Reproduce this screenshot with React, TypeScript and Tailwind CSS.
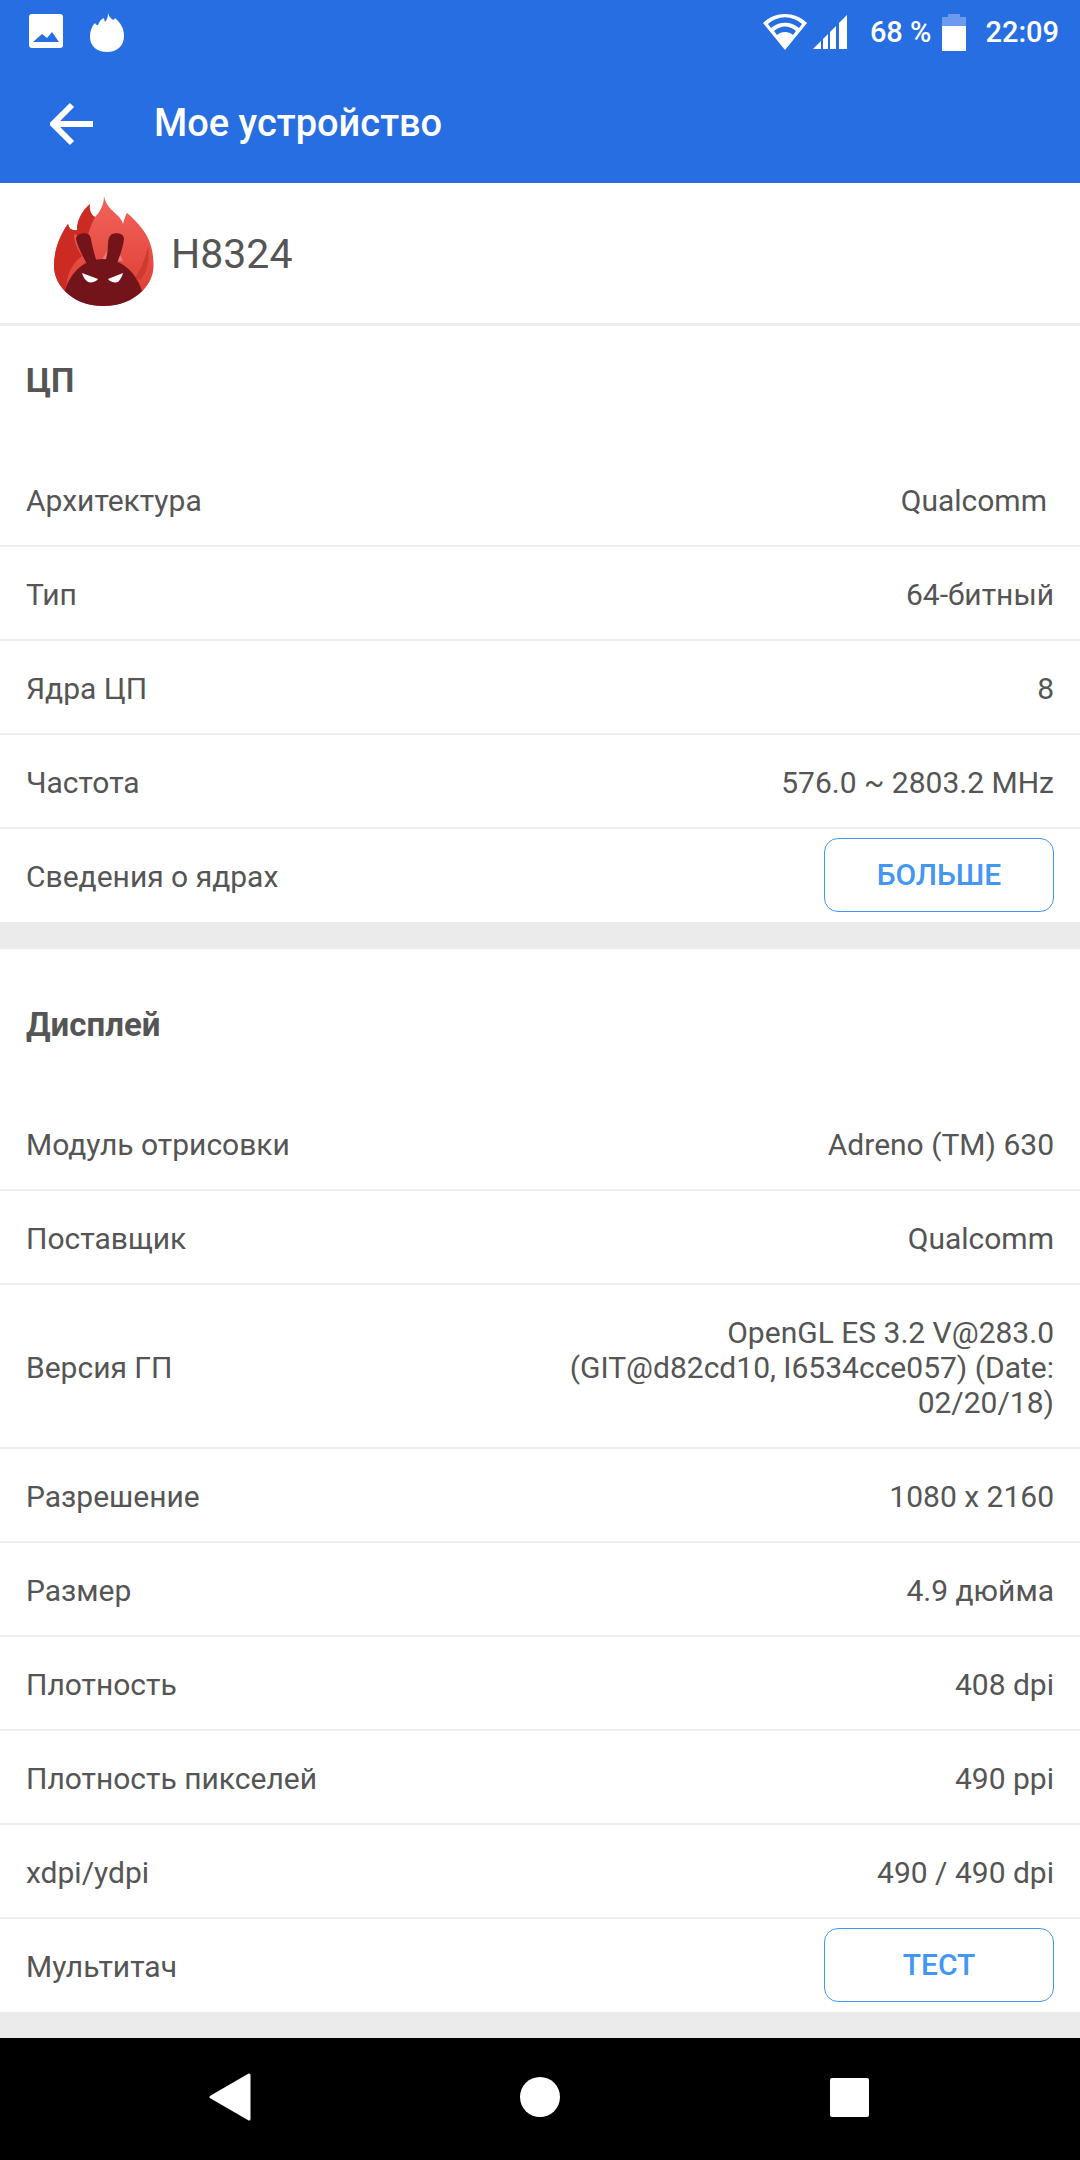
const cpuRows = [
  { label: 'Тип', value: '64-битный' },
  { label: 'Ядра ЦП', value: '8' },
  { label: 'Частота', value: '576.0 ~ 2803.2 MHz' },
];

const displayTop = [
  { label: 'Модуль отрисовки', value: 'Adreno (TM) 630' },
  { label: 'Поставщик', value: 'Qualcomm' },
];

const displayBottom = [
  { label: 'Разрешение', value: '1080 x 2160' },
  { label: 'Размер', value: '4.9 дюйма' },
  { label: 'Плотность', value: '408 dpi' },
  { label: 'Плотность пикселей', value: '490 ppi' },
  { label: 'xdpi/ydpi', value: '490 / 490 dpi' },
];

function Row({ label, value }: { label: string; value: string }) {
  return (
    <div className="flex h-[94px] items-center justify-between border-b-2 border-[#eeeeee] pl-[26px] pr-[26px] pt-[2px]">
      <span>{label}</span>
      <span>{value}</span>
    </div>
  );
}

function ButtonRow({ label, action }: { label: string; action: string }) {
  return (
    <div className="flex h-[93px] items-center justify-between pl-[26px] pr-[26px]">
      <span className="pt-[1px]">{label}</span>
      <button className="mb-[2px] h-[74px] w-[230px] rounded-[14px] border border-[#4496f5] text-[30px] font-medium text-[#4496f5]">
        {action}
      </button>
    </div>
  );
}

function AntutuLogo() {
  return (
    <svg width="130" height="130" viewBox="0 0 130 130">
      <defs>
        <linearGradient id="flame" x1="0" y1="0" x2="0" y2="1">
          <stop offset="0" stopColor="#f2645c" />
          <stop offset="1" stopColor="#dc3a30" />
        </linearGradient>
      </defs>
      <path
        d="M64 8 C66 18 72 22 77 27 C80 30 82 32 83 36 C84 32 85 28 87 25 C99 35 109 47 112 62 C113 67 113.500 72 113.500 78 C113.500 100 91 118 63.500 118 C36 118 14 100 14 78 C14 62 20 47 28 36 C29 41 32 43 37 42 C37 32 42 23 50 16 C49 22 51 27 55 29 C60 24 64 17 64 8 Z"
        fill="url(#flame)"
      />
      <path
        d="M50 16 C42 23 37 32 37 42 C32 43 29 41 28 36 C20 47 14 62 14 78 C14 88 19 98 27 105 C25 92 29 78 42 68 C36 60 34 52 34 46 C40 48 44 52 46 58 C47 48 50 38 55 29 C51 27 49 22 50 16 Z"
        fill="#cb2b22"
      />
      <path d="M71 54 C76 60 80 66 83 73 L61 73 C65 67 69 60 71 54 Z" fill="#ee7c76" />
      <path d="M108 58 C110 70 108 84 100 92 L95 90 C102 80 106 68 108 58 Z" fill="#cf3a30" />
      <path
        d="M36 51 C36 46 43 44 48 46 C51 48 51 52 52 56 C53 61 55 68 57 75 L48 78 C44 70 38 60 36 51 Z"
        fill="#72141a"
      />
      <path
        d="M84 51 C84 46 78 44 72 46 C69 48 68 52 68 56 C68 62 67 68 65 75 L76 78 C79 70 83 60 84 51 Z"
        fill="#72141a"
      />
      <path
        d="M25 103 C31 82 46 71 63 71 C80 71 95 82 102 103 C92 113 79 118 63.500 118 C48 118 34 113 25 103 Z"
        fill="#72141a"
      />
      <path d="M42 85 C47 87 53 89 58 91 C56 94 51 95 48 94 C45 92 43 89 42 85 Z" fill="#ffffff" />
      <path d="M83 85 C78 87 73 89 68 91 C70 94 75 95 78 94 C80 92 82 89 83 85 Z" fill="#ffffff" />
    </svg>
  );
}

export default function App() {
  return (
    <div className="flex h-[2160px] w-[1080px] flex-col overflow-hidden bg-white font-['Roboto',sans-serif] text-[30px] text-[#555555]">
      <header className="h-[183px] bg-[#276ee2] text-white">
        <div className="flex h-[64px] items-center pl-[29px] pr-[21px]">
          <svg width="34" height="34" viewBox="0 0 34 34" className="mt-[-2px]">
            <path
              d="M3 0 H31 A3 3 0 0 1 34 3 V31 A3 3 0 0 1 31 34 H3 A3 3 0 0 1 0 31 V3 A3 3 0 0 1 3 0 Z M4 28 H30 L23 18 L18 24 L13 20 Z"
              fill="#ffffff"
              fillRule="evenodd"
            />
          </svg>
          <svg width="34" height="40" viewBox="0 0 34 40" className="ml-[27px] mt-[1px]">
            <path
              d="M18 0 C19 4 21 5 23 7 C24 6 25 6 25 5 C31 10 34 16 34 23 C34 33 27 39 17 39 C7 39 0 33 0 24 C0 18 2 13 5 10 C6 12 7 12 8 12 C9 9 11 6 14 5 C14 7 15 8 15 9 C17 7 18 4 18 0 Z"
              fill="#ffffff"
            />
          </svg>
          <div className="flex-1" />
          <svg width="44" height="36" viewBox="0 0 44 36">
            <path
              d="M22 36 L0 9 C12 -3 32 -3 44 9 Z M5 10 L8 14 C16 7 28 7 36 14 L39 10 C29 1 15 1 5 10 Z M11 17 L14 21 C18 17 26 17 30 21 L33 17 C26 11 18 11 11 17 Z"
              fill="#ffffff"
              fillRule="evenodd"
            />
          </svg>
          <svg width="34" height="34" viewBox="0 0 34 34" className="ml-[6px]">
            <path
              d="M0 34 L8 26 V34 Z M10 24 L15 19 V34 H10 Z M17 17 L23 11 V34 H17 Z M26 8 L34 0 V34 H26 Z"
              fill="#ffffff"
            />
          </svg>
          <span className="ml-[23px] text-[29px] font-medium leading-none">68 %</span>
          <div className="ml-[11px] flex h-[37px] w-[24px] flex-col">
            <div className="mx-auto h-[3px] w-[12px] bg-[#6b9bee]" />
            <div className="h-[9px] bg-[#6b9bee]" />
            <div className="flex-1 bg-white" />
          </div>
          <span className="ml-[19px] text-[29px] font-medium leading-none">22:09</span>
        </div>
        <div className="flex h-[119px] items-center pl-[50px]">
          <svg width="44" height="44" viewBox="0 0 44 44">
            <path d="M22 3 L3 22 L22 41 M3 22 H43" fill="none" stroke="#ffffff" strokeWidth="6" />
          </svg>
          <h1 className="ml-[60px] text-[38px] font-medium">Мое устройство</h1>
        </div>
      </header>

      <div className="flex h-[143px] items-center border-b-[3px] border-[#eeeeee] pl-[40px]">
        <AntutuLogo />
        <span className="ml-[1px] pt-[4px] text-[41px]">H8324</span>
      </div>

      <section className="border-b-[27px] border-[#ebebeb]">
        <h2 className="flex h-[127px] items-start pl-[26px] pt-[37px] text-[33px] font-bold leading-[36px]">ЦП</h2>
        <div className="flex h-[94px] items-center justify-between border-b-2 border-[#eeeeee] pl-[26px] pr-[33px] pt-[2px]">
          <span>Архитектура</span>
          <span>Qualcomm</span>
        </div>
        {cpuRows.map((row) => (
          <Row key={row.label} label={row.label} value={row.value} />
        ))}
        <ButtonRow label="Сведения о ядрах" action="БОЛЬШЕ" />
      </section>

      <section className="border-b-[26px] border-[#ebebeb]">
        <h2 className="flex h-[148px] items-start pl-[26px] pt-[58px] text-[33px] font-bold leading-[36px]">Дисплей</h2>
        {displayTop.map((row) => (
          <Row key={row.label} label={row.label} value={row.value} />
        ))}
        <div className="flex h-[164px] items-center justify-between border-b-2 border-[#eeeeee] pl-[26px] pr-[26px] pt-[2px]">
          <span>Версия ГП</span>
          <span className="w-[530px] text-right leading-[35px]">
            OpenGL ES 3.2 V@283.0 (GIT@d82cd10, I6534cce057) (Date: 02/20/18)
          </span>
        </div>
        {displayBottom.map((row) => (
          <Row key={row.label} label={row.label} value={row.value} />
        ))}
        <ButtonRow label="Мультитач" action="ТЕСТ" />
      </section>

      <nav className="flex flex-1 items-center bg-black pb-[4px]">
        <svg width="42" height="48" viewBox="0 0 42 48" className="ml-[209px]">
          <path d="M2 24 L40 2 V46 Z" fill="#ffffff" stroke="#ffffff" strokeWidth="3" strokeLinejoin="round" />
        </svg>
        <div className="ml-[269px] h-[40px] w-[40px] rounded-full bg-white" />
        <div className="ml-[270px] h-[39px] w-[39px] rounded-[2px] bg-white" />
      </nav>
    </div>
  );
}
